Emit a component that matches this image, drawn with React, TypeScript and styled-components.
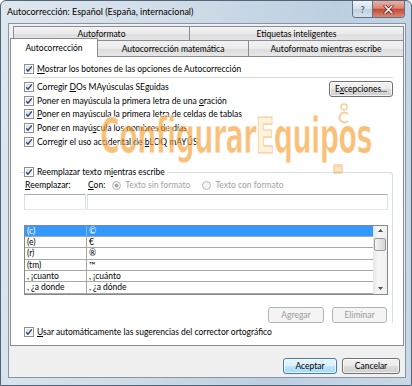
import React from "react";
import styled, { createGlobalStyle } from "styled-components";

const FONT = `Lato, "Liberation Sans", Arial, sans-serif`;

const Global = createGlobalStyle`
  html, body { margin: 0; padding: 0; background: #ffffff; }
  body { font-family: ${FONT}; }
  * { box-sizing: border-box; }
`;

const Window = styled.div`
  position: relative;
  width: 412px;
  height: 386px;
  border: 1px solid #51657a;
  border-radius: 6px 6px 0 0;
  background: linear-gradient(100deg, #dfe7ee 0%, #d2dde8 35%, #bccfe1 70%, #c9d8e6 100%);
  display: flex;
  flex-direction: column;
  font-family: ${FONT};
  font-size: 8.5px;
  color: #000;
  overflow: hidden;
`;

const TitleBar = styled.div`
  height: 22px;
  flex-shrink: 0;
  display: flex;
  align-items: flex-start;
  padding: 0 6px 0 6px;
`;

const TitleText = styled.div`
  flex: 1;
  line-height: 21px;
  font-size: 9px;
  white-space: nowrap;
`;

const CaptionGroup = styled.div`
  display: flex;
  height: 17px;
  border: 1px solid #5f7186;
  border-top: none;
  border-radius: 0 0 4px 4px;
  overflow: hidden;
`;

const HelpBtn = styled.div`
  width: 20px;
  background: linear-gradient(#eef3f8, #d6e1ec 48%, #c1d0df 52%, #d4e1ec);
  border-right: 1px solid #5f7186;
  display: flex;
  align-items: center;
  justify-content: center;
  color: #4a6384;
  font-size: 9px;
  font-weight: bold;
`;

const CloseBtn = styled.div`
  width: 31px;
  background: linear-gradient(#eab0a6, #d88674 45%, #c5473a 52%, #d98a72);
  display: flex;
  align-items: center;
  justify-content: center;
`;

const Client = styled.div`
  flex: 1;
  margin: 0 5px 7px 7px;
  background: #f0f0f0;
  border: 1px solid #8496a8;
  display: flex;
  flex-direction: column;
`;

const TabRow = styled.div<{ $front?: boolean }>`
  display: flex;
  align-items: flex-start;
  flex-shrink: 0;
  height: ${(p) => (p.$front ? 17 : 14)}px;
  margin: ${(p) => (p.$front ? "0 1px -1px 1px" : "2px 1px 0 4px")};
`;

const Tab = styled.div<{ $w: number; $h: number; $active?: boolean }>`
  flex: 0 0 ${(p) => p.$w}px;
  height: ${(p) => p.$h}px;
  margin-top: ${(p) => (p.$active ? -2 : 0)}px;
  border: 1px solid #898c95;
  border-bottom: none;
  background: ${(p) =>
    p.$active ? "#ffffff" : "linear-gradient(#f2f2f2, #ebebeb 50%, #dcdcdc 51%, #e6e6e6)"};
  position: relative;
  z-index: ${(p) => (p.$active ? 1 : 0)};
  display: flex;
  align-items: center;
  justify-content: center;
  padding-bottom: ${(p) => (p.$active ? 1 : 0)}px;
  white-space: nowrap;
  & + & {
    border-left: none;
  }
`;

const Panel = styled.div`
  margin: 0 1px;
  height: 290px;
  flex-shrink: 0;
  background: #fff;
  border: 1px solid #898c95;
  padding: 5px 10px 0 10px;
  display: flex;
  flex-direction: column;
`;

const CheckRow = styled.div<{ $h?: number; $pl?: number; $mt?: number }>`
  display: flex;
  align-items: center;
  gap: 3px;
  height: ${(p) => p.$h ?? 14}px;
  margin-top: ${(p) => p.$mt ?? 0}px;
  padding-left: ${(p) => p.$pl ?? 3}px;
  white-space: nowrap;
`;

const Box = styled.span`
  width: 10px;
  height: 10px;
  flex-shrink: 0;
  border: 1px solid #8e8f8f;
  background: linear-gradient(135deg, #d6d8dc, #f7f7f7);
  box-shadow: inset 0 0 0 1px #fff;
  display: flex;
  align-items: center;
  justify-content: center;
`;

const Separator = styled.div`
  height: 1px;
  margin: 1px 0 0 2px;
  background: #d9d9d9;
`;

const Section = styled.div`
  display: flex;
  margin-top: 2px;
`;

const Column = styled.div`
  display: flex;
  flex-direction: column;
  flex: 1;
`;

const Button = styled.div<{ $w: number; $disabled?: boolean; $default?: boolean }>`
  width: ${(p) => p.$w}px;
  height: 16px;
  flex-shrink: 0;
  border: 1px solid ${(p) => (p.$disabled ? "#b2b5b8" : p.$default ? "#3c7fb1" : "#707070")};
  border-radius: 3px;
  background: ${(p) =>
    p.$disabled
      ? "#f4f4f4"
      : p.$default
      ? "linear-gradient(#eaf6fd, #d9f0fc 50%, #bee6fd 51%, #a7d9f5)"
      : "linear-gradient(#f2f2f2, #ebebeb 50%, #dddddd 51%, #cfcfcf)"};
  box-shadow: inset 0 0 0 1px ${(p) => (p.$disabled ? "#f4f4f4" : "rgba(255,255,255,0.7)")};
  color: ${(p) => (p.$disabled ? "#9a9a9a" : "#000")};
  display: flex;
  align-items: center;
  justify-content: center;
  white-space: nowrap;
`;

const ExcButton = styled(Button)`
  margin-top: 1px;
  margin-left: auto;
`;

const Group = styled.div`
  margin-top: 23px;
  border-top: 1px solid #d5dfe5;
  border-right: 1px solid #d5dfe5;
  border-top-right-radius: 3px;
  padding: 0 4px 0 3px;
  display: flex;
  flex-direction: column;
`;

const Legend = styled(CheckRow)`
  margin-top: -8px;
  align-self: flex-start;
  background: #fff;
  padding-right: 2px;
`;

const FieldGrid = styled.div<{ $h: number; $mt: number }>`
  display: grid;
  grid-template-columns: 62px 1fr;
  column-gap: 1px;
  height: ${(p) => p.$h}px;
  margin-top: ${(p) => p.$mt}px;
  align-items: center;
`;

const LabelCell = styled.div`
  display: flex;
  align-items: center;
  white-space: nowrap;
  padding-left: 1px;
`;

const RadioLabel = styled.span<{ $ml: number }>`
  display: flex;
  align-items: center;
  gap: 4px;
  margin-left: ${(p) => p.$ml}px;
  color: #a3a3a3;
`;

const Radio = styled.span<{ $on?: boolean }>`
  width: 9px;
  height: 9px;
  border-radius: 50%;
  border: 1px solid #b7b7b7;
  background: ${(p) => (p.$on ? "radial-gradient(circle, #a8a8a8 0 1.8px, #f3f3f3 2.2px)" : "#f6f6f6")};
`;

const Input = styled.div`
  height: 16px;
  border: 1px solid #abadb3;
  border-left-color: #dbdfe6;
  border-right-color: #dbdfe6;
  border-bottom-color: #e3e9ef;
  background: #fff;
`;

const List = styled.div`
  margin-top: 15px;
  height: 70px;
  border: 1px solid #828790;
  display: flex;
  background: #fff;
`;

const Rows = styled.div`
  flex: 1;
  display: flex;
  flex-direction: column;
`;

const Row = styled.div<{ $sel?: boolean }>`
  height: 11.33px;
  display: grid;
  grid-template-columns: 62px 1fr;
  border-bottom: 1px solid #a8a8a8;
  background: ${(p) => (p.$sel ? "#3399ff" : "#fff")};
  color: ${(p) => (p.$sel ? "#fff" : "#000")};
  line-height: 10px;
  white-space: nowrap;
`;

const Cell = styled.div<{ $sel?: boolean; $first?: boolean }>`
  padding-left: 2px;
  border-right: ${(p) => (p.$first ? `1px solid ${p.$sel ? "#7ebcf7" : "#a8a8a8"}` : "none")};
  overflow: hidden;
`;

const ScrollBar = styled.div`
  width: 14px;
  flex-shrink: 0;
  background: linear-gradient(to right, #e6e6e6, #f6f6f6 40%, #efefef);
  display: flex;
  flex-direction: column;
  align-items: center;
`;

const Arrow = styled.div`
  height: 10px;
  width: 100%;
  display: flex;
  align-items: center;
  justify-content: center;
`;

const Thumb = styled.div`
  width: 12px;
  height: 13px;
  margin-top: 2px;
  border: 1px solid #9a9a9a;
  border-radius: 2px;
  background: linear-gradient(to right, #f3f3f3, #e4e4e4 50%, #d4d4d4);
`;

const Spacer = styled.div`
  flex: 1;
`;

const ButtonRow = styled.div<{ $gap: number }>`
  display: flex;
  justify-content: flex-end;
  gap: ${(p) => p.$gap}px;
`;

const GroupButtons = styled(ButtonRow)`
  margin-top: 12px;
  padding-right: 1px;
`;

const Footer = styled(ButtonRow)`
  padding: 12px 5px 0 0;
`;

const Watermark = styled.div`
  position: absolute;
  left: 99px;
  top: 110px;
  font-family: "DejaVu Sans Condensed", "DejaVu Sans", sans-serif;
  font-weight: bold;
  font-size: 50px;
  line-height: 50px;
  letter-spacing: -1px;
  color: rgba(244, 150, 30, 0.62);
  -webkit-text-stroke: 1.2px rgba(255, 255, 255, 0.8);
  transform: scaleX(0.6);
  transform-origin: left top;
  white-space: nowrap;
  pointer-events: none;
`;

const LightE = styled.span`
  color: rgba(255, 236, 200, 0.65);
  -webkit-text-stroke: 1.2px rgba(240, 160, 60, 0.55);
`;

const Figure = styled.svg`
  position: absolute;
  left: 326px;
  top: 100px;
  pointer-events: none;
`;

const Check = () => (
  <Box>
    <svg width="8" height="8" viewBox="0 0 8 8">
      <path d="M1.2 4.2 L3 6.2 L6.8 1.4" fill="none" stroke="#2c4778" strokeWidth="1.4" />
    </svg>
  </Box>
);

const Triangle = ({ down }: { down?: boolean }) => (
  <svg width="5" height="3" viewBox="0 0 5 3">
    <path d={down ? "M0 0 L5 0 L2.5 3 Z" : "M0 3 L5 3 L2.5 0 Z"} fill="#4d4d4d" />
  </svg>
);

const rows: [string, string][] = [
  ["(c)", "©"],
  ["(e)", "€"],
  ["(r)", "®"],
  ["(tm)", "™"],
  [", ¡cuanto", ", ¡cuánto"],
  [", ¿a donde", ", ¿a dónde"],
];

export default function App() {
  return (
    <>
      <Global />
      <Window>
        <TitleBar>
          <TitleText>Autocorrección: Español (España, internacional)</TitleText>
          <CaptionGroup>
            <HelpBtn>?</HelpBtn>
            <CloseBtn>
              <svg width="11" height="9" viewBox="0 0 11 9">
                <path d="M2 1 L9 8 M9 1 L2 8" stroke="#5a1a14" strokeWidth="3" strokeLinecap="round" />
                <path d="M2 1 L9 8 M9 1 L2 8" stroke="#ffffff" strokeWidth="1.6" strokeLinecap="round" />
              </svg>
            </CloseBtn>
          </CaptionGroup>
        </TitleBar>
        <Client>
          <TabRow>
            <Tab $w={177} $h={14}>Autoformato</Tab>
            <Tab $w={214} $h={14}>Etiquetas inteligentes</Tab>
          </TabRow>
          <TabRow $front>
            <Tab $w={88} $h={19} $active>Autocorrección</Tab>
            <Tab $w={151} $h={16}>Autocorrección matemática</Tab>
            <Tab $w={155} $h={16}>Autoformato mientras escribe</Tab>
          </TabRow>
          <Panel>
            <CheckRow>
              <Check />
              <span><u>M</u>ostrar los botones de las opciones de Autocorrección</span>
            </CheckRow>
            <Separator />
            <Section>
              <Column>
                <CheckRow $h={13.75}>
                  <Check />
                  <span>Corregir <u>D</u>Os MAyúsculas SEguidas</span>
                </CheckRow>
                <CheckRow $h={13.75}>
                  <Check />
                  <span>Poner en mayúscula la primera letra de una <u>o</u>ración</span>
                </CheckRow>
                <CheckRow $h={13.75}>
                  <Check />
                  <span><u>P</u>oner en mayúscula la primera letra de celdas de tablas</span>
                </CheckRow>
                <CheckRow $h={13.75}>
                  <Check />
                  <span>Poner en mayú<u>s</u>cula los nombres de días</span>
                </CheckRow>
                <CheckRow $h={13.75}>
                  <Check />
                  <span>Corregir el uso accidental de <u>b</u>LOQ mAYÚS</span>
                </CheckRow>
              </Column>
              <ExcButton $w={64}>E<u>x</u>cepciones...</ExcButton>
            </Section>
            <Group>
              <Legend $pl={0}>
                <Check />
                <span>Reemplazar texto m<u>i</u>entras escribe</span>
              </Legend>
              <FieldGrid $h={13} $mt={0}>
                <LabelCell><u>R</u>eemplazar:</LabelCell>
                <LabelCell>
                  <span><u>C</u>on:</span>
                  <RadioLabel $ml={7}>
                    <Radio $on />
                    Texto sin formato
                  </RadioLabel>
                  <RadioLabel $ml={12}>
                    <Radio />
                    Texto con formato
                  </RadioLabel>
                </LabelCell>
              </FieldGrid>
              <FieldGrid $h={16} $mt={2}>
                <Input />
                <Input />
              </FieldGrid>
              <List>
                <Rows>
                  {rows.map(([a, b], i) => (
                    <Row key={a} $sel={i === 0}>
                      <Cell $first $sel={i === 0}>{a}</Cell>
                      <Cell $sel={i === 0}>{b}</Cell>
                    </Row>
                  ))}
                </Rows>
                <ScrollBar>
                  <Arrow><Triangle /></Arrow>
                  <Thumb />
                  <Spacer />
                  <Arrow><Triangle down /></Arrow>
                </ScrollBar>
              </List>
              <GroupButtons $gap={8}>
                <Button $w={56} $disabled>Agregar</Button>
                <Button $w={55} $disabled>Eliminar</Button>
              </GroupButtons>
            </Group>
            <CheckRow $mt={2}>
              <Check />
              <span><u>U</u>sar automáticamente las sugerencias del corrector ortográfico</span>
            </CheckRow>
          </Panel>
          <Footer $gap={5}>
            <Button $w={54} $default>Aceptar</Button>
            <Button $w={58}>Cancelar</Button>
          </Footer>
        </Client>
        <Watermark>
          Configurar<LightE>E</LightE>quipos
        </Watermark>
        <Figure width="34" height="76" viewBox="0 0 34 76">
          <circle cx="17" cy="6" r="3" fill="none" stroke="rgba(240,160,60,0.5)" strokeWidth="1.5" />
          <path d="M21 13 A5 5 0 1 0 21 20" fill="none" stroke="rgba(240,160,60,0.5)" strokeWidth="2" />
          <rect x="6" y="63" width="10" height="10" rx="2" fill="rgba(240,160,60,0.4)" />
          <path d="M9 66 V70 M11 66 V70 M13 66 V70" stroke="rgba(255,255,255,0.8)" strokeWidth="0.8" />
        </Figure>
      </Window>
    </>
  );
}
